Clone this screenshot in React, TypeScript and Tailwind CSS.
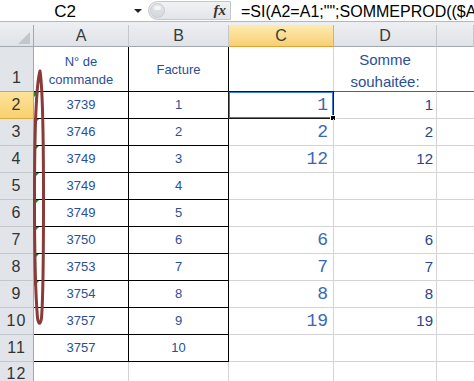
import React from "react";

type Row = { n: number; a: string; b: string; c: string; d: string; tri: boolean };

const rows: Row[] = [
  { n: 2, a: "3739", b: "1", c: "1", d: "1", tri: true },
  { n: 3, a: "3746", b: "2", c: "2", d: "2", tri: true },
  { n: 4, a: "3749", b: "3", c: "12", d: "12", tri: true },
  { n: 5, a: "3749", b: "4", c: "", d: "", tri: true },
  { n: 6, a: "3749", b: "5", c: "", d: "", tri: true },
  { n: 7, a: "3750", b: "6", c: "6", d: "6", tri: true },
  { n: 8, a: "3753", b: "7", c: "7", d: "7", tri: true },
  { n: 9, a: "3754", b: "8", c: "8", d: "8", tri: true },
  { n: 10, a: "3757", b: "9", c: "19", d: "19", tri: false },
  { n: 11, a: "3757", b: "10", c: "", d: "", tri: false },
];

function ColHead({ label, w, active }: { label: string; w: string; active?: boolean }) {
  return (
    <div
      className={
        (active
          ? "bg-gradient-to-b from-[#fdebb0] to-[#f8cf72] border-r border-r-[#e8b04a] border-b border-b-[#dea136] "
          : "bg-gradient-to-b from-[#eceef1] to-[#dfe2e7] border-r border-r-[#c4c8ce] border-b border-b-[#a2a8b0] ") +
        w +
        " flex items-center justify-center text-[16px] text-[#3a3a3a]"
      }
    >
      {label}
    </div>
  );
}

export default function App() {
  return (
    <div className="relative w-[474px] h-[381px] overflow-hidden bg-white font-['Liberation_Sans',Arial,sans-serif]">
      {/* formula bar */}
      <div className="flex h-[21px] bg-white">
        <div className="w-[130px] flex items-center justify-center text-[17px] text-black leading-none pt-[1px]">C2</div>
        <div className="w-[16px] flex items-center justify-center">
          <div className="w-0 h-0 border-l-[4px] border-l-transparent border-r-[4px] border-r-transparent border-t-[4px] border-t-[#222]" />
        </div>
        <div className="ml-[2px] mt-[1px] w-[83px] h-[19px] rounded-l-full border border-[#c3c7cd] bg-gradient-to-b from-[#f1f2f4] to-[#e2e5e9] flex items-center">
          <div className="ml-[1px] w-[15px] h-[15px] rounded-full border border-[#c6cad0] bg-gradient-to-b from-[#e3e5e8] to-[#d5d8dc] flex items-start justify-center">
            <div className="mt-[2px] w-[7px] h-[4px] rounded-full bg-[#f4f5f6]" />
          </div>
          <div className="flex-1" />
          <div className="mr-[4px] text-[15px] italic font-bold text-[#333] font-['Liberation_Serif',serif] leading-none">fx</div>
        </div>
        <div className="flex-1 min-w-0 pl-[10px] text-[16px] text-black whitespace-nowrap overflow-hidden flex items-center pt-[2px] leading-none">
          =SI(A2=A1;"";SOMMEPROD(($A$2:$A$11=A2)*($B$2:$B$11)))
        </div>
      </div>
      <div className="h-px bg-[#b4b9c0]" />
      <div className="h-[3px] bg-[#eceef1]" />

      {/* column headers */}
      <div className="flex h-[22px]">
        <div className="relative w-[34px] bg-gradient-to-b from-[#eceef1] to-[#dfe2e7] border-r border-r-[#a2a8b0] border-b border-b-[#a2a8b0]">
          <div className="absolute right-[3px] bottom-[2px] w-0 h-0 border-l-[12px] border-l-transparent border-b-[12px] border-b-[#c3c7cd]" />
        </div>
        <ColHead label="A" w="w-[95px]" />
        <ColHead label="B" w="w-[100px]" />
        <ColHead label="C" w="w-[105px]" active />
        <ColHead label="D" w="w-[103px]" />
        <ColHead label="" w="flex-1" />
      </div>

      {/* row 1 */}
      <div className="flex h-[45px]">
        <div className="w-[34px] bg-[#e1e4e9] border-r border-r-[#a2a8b0] border-b border-b-[#d9a444] flex items-end justify-center pb-[1px] text-[16px] text-[#333]">
          1
        </div>
        <div className="w-[95px] border-r border-b border-black flex flex-col items-center justify-center pt-[4px] text-[13px] leading-[18px] text-[#2a4f9a]">
          <span>N° de</span>
          <span>commande</span>
        </div>
        <div className="w-[100px] border-r border-b border-black flex items-center justify-center pt-[2px] text-[13px] text-[#2a4f9a]">
          Facture
        </div>
        <div className="w-[105px] border-r border-r-[#d4d4d4] border-b border-b-[#5f5f5f]" />
        <div className="w-[103px] border-r border-r-[#d4d4d4] border-b border-b-[#5f5f5f] flex flex-col items-center justify-center pt-[3px] text-[15px] leading-[22px] text-[#2a4f9a]">
          <span>Somme</span>
          <span>souhaitée:</span>
        </div>
        <div className="flex-1 border-b border-b-[#5f5f5f]" />
      </div>

      {rows.map((r) => {
        const active = r.n === 2;
        return (
          <div key={r.n} className="flex h-[27px]">
            <div
              className={
                (active
                  ? "bg-gradient-to-b from-[#fde39a] to-[#f8d06e] border-b-[#e2a93f] "
                  : "bg-[#e1e4e9] border-b-[#c3c8cf] ") +
                "w-[34px] border-r border-r-[#a2a8b0] border-b flex items-center justify-center text-[16px] tracking-[1px] text-[#333]"
              }
            >
              {r.n}
            </div>
            <div className="relative w-[95px] border-r border-b border-black flex items-center justify-center text-[13px] text-[#2a4f9a]">
              {r.tri && (
                <div className="absolute top-0 left-0 w-0 h-0 border-t-[5px] border-t-[#1f8a2a] border-r-[5px] border-r-transparent" />
              )}
              {r.a}
            </div>
            <div className="w-[100px] border-r border-b border-black flex items-center justify-center text-[13px] text-[#2a4f9a]">
              {r.b}
            </div>
            <div className="relative w-[105px] border-r border-b border-[#d4d4d4] flex items-center justify-end pr-[5px] pt-[1px] text-[18px] text-[#3a68b4] font-['Liberation_Mono',monospace]">
              {r.c}
              {active && (
                <>
                  <div className="absolute -left-px -top-px w-[106px] h-[28px] border border-[#1a1a1a]">
                    <div className="w-full h-full border border-[#3b7ad6]" />
                  </div>
                  <div className="absolute -right-[3px] -bottom-[3px] w-[6px] h-[6px] bg-black border border-white" />
                </>
              )}
            </div>
            <div className="w-[103px] border-r border-b border-[#d4d4d4] flex items-center justify-end pr-[3px] text-[15px] text-[#24468a]">
              {r.d}
            </div>
            <div className="flex-1 border-b border-[#d4d4d4]" />
          </div>
        );
      })}

      {/* row 12 */}
      <div className="flex h-[24px]">
        <div className="w-[34px] bg-[#e1e4e9] border-r border-r-[#a2a8b0] flex items-center justify-center text-[16px] tracking-[1px] text-[#333]">
          12
        </div>
        <div className="w-[95px] border-r border-[#d4d4d4]" />
        <div className="w-[100px] border-r border-[#d4d4d4]" />
        <div className="w-[105px] border-r border-[#d4d4d4]" />
        <div className="w-[103px] border-r border-[#d4d4d4]" />
        <div className="flex-1" />
      </div>

      {/* hand-drawn ellipse */}
      <svg className="absolute left-0 top-0 pointer-events-none" width="474" height="381" viewBox="0 0 474 381">
        <path
          d="M 40 71 C 36 85, 34.5 140, 34.5 200 C 34.5 260, 36 300, 37.5 318 C 38.5 325, 40.5 325, 41.5 318 C 43 300, 43.5 260, 43.5 200 C 43.5 140, 43 90, 40 71 Z"
          fill="none"
          stroke="#8a3a38"
          strokeWidth="3"
          strokeLinejoin="round"
        />
      </svg>
    </div>
  );
}
